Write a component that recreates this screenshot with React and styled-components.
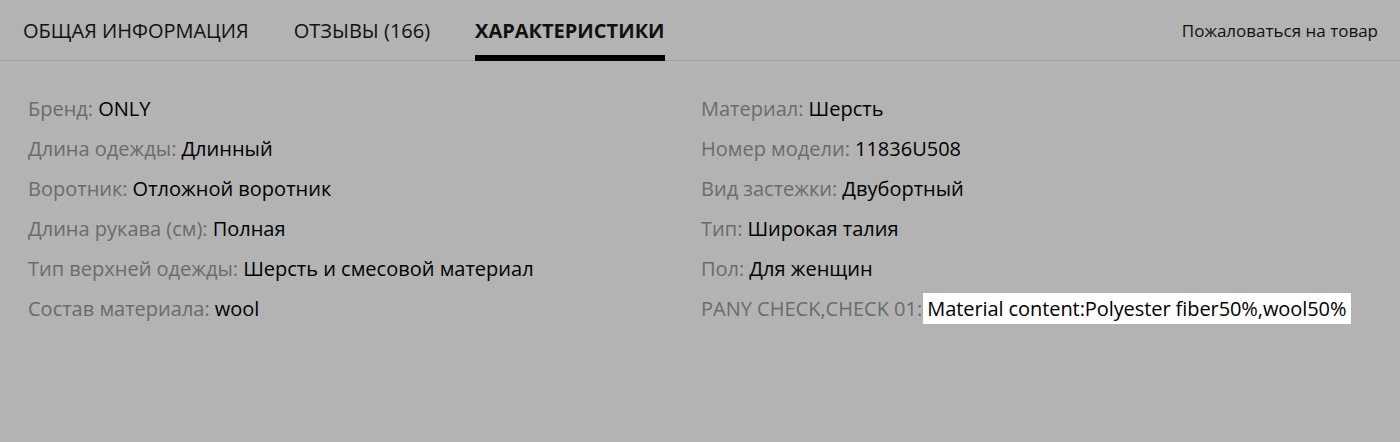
import React from "react";
import styled, { createGlobalStyle } from "styled-components";

const GlobalStyle = createGlobalStyle`
  html, body {
    margin: 0;
    padding: 0;
    background: #b3b3b3;
  }
  body {
    font-family: "Open Sans", "Noto Sans", sans-serif;
  }
`;

const Page = styled.div`
  width: 1400px;
  height: 442px;
  background: #b3b3b3;
`;

const TabBar = styled.div`
  display: flex;
  align-items: flex-start;
  justify-content: space-between;
  height: 61px;
  padding: 0 22px 0 23px;
  box-sizing: border-box;
  border-bottom: 1px solid #a2a2a2;
`;

const Tabs = styled.div`
  display: flex;
  gap: 45px;
`;

const Tab = styled.div`
  display: flex;
  align-items: center;
  height: 61px;
  box-sizing: border-box;
  padding-top: 5px;
  font-size: 20px;
  text-transform: uppercase;
  color: #111;
  font-weight: ${(p) => (p.$active ? 700 : 400)};
  border-bottom: 6px solid ${(p) => (p.$active ? "#000" : "transparent")};
`;

const Report = styled.div`
  height: 60px;
  display: flex;
  align-items: center;
  font-size: 17px;
  color: #111;
`;

const Specs = styled.div`
  display: grid;
  grid-template-columns: 673px 1fr;
  padding: 27px 28px 0;
`;

const Column = styled.div`
  display: flex;
  flex-direction: column;
`;

const Row = styled.div`
  height: 40px;
  display: flex;
  align-items: center;
  font-size: 20px;
  line-height: 27px;
  white-space: nowrap;
`;

const Label = styled.span`
  color: #6b6b6b;
  margin-right: 5px;
`;

const Value = styled.span`
  color: #000;
  background: ${(p) => (p.$highlight ? "#fff" : "transparent")};
  padding: ${(p) => (p.$highlight ? "2px 5px 2px 4px" : "0")};
  margin-left: ${(p) => (p.$highlight ? "-4px" : "0")};
  letter-spacing: ${(p) => (p.$highlight ? "-0.08px" : "normal")};
`;

const left = [
  ["Бренд", "ONLY"],
  ["Длина одежды", "Длинный"],
  ["Воротник", "Отложной воротник"],
  ["Длина рукава (см)", "Полная"],
  ["Тип верхней одежды", "Шерсть и смесовой материал"],
  ["Состав материала", "wool"],
];

const right = [
  ["Материал", "Шерсть"],
  ["Номер модели", "11836U508"],
  ["Вид застежки", "Двубортный"],
  ["Тип", "Широкая талия"],
  ["Пол", "Для женщин"],
  ["PANY CHECK,CHECK 01", "Material content:Polyester fiber50%,wool50%", true],
];

function SpecColumn({ items }) {
  return (
    <Column>
      {items.map(([k, v, hl]) => (
        <Row key={k}>
          <Label>{k}:</Label>
          <Value $highlight={hl}>{v}</Value>
        </Row>
      ))}
    </Column>
  );
}

export default function App() {
  return (
    <Page>
      <GlobalStyle />
      <TabBar>
        <Tabs>
          <Tab>Общая информация</Tab>
          <Tab>Отзывы (166)</Tab>
          <Tab $active>Характеристики</Tab>
        </Tabs>
        <Report>Пожаловаться на товар</Report>
      </TabBar>
      <Specs>
        <SpecColumn items={left} />
        <SpecColumn items={right} />
      </Specs>
    </Page>
  );
}
